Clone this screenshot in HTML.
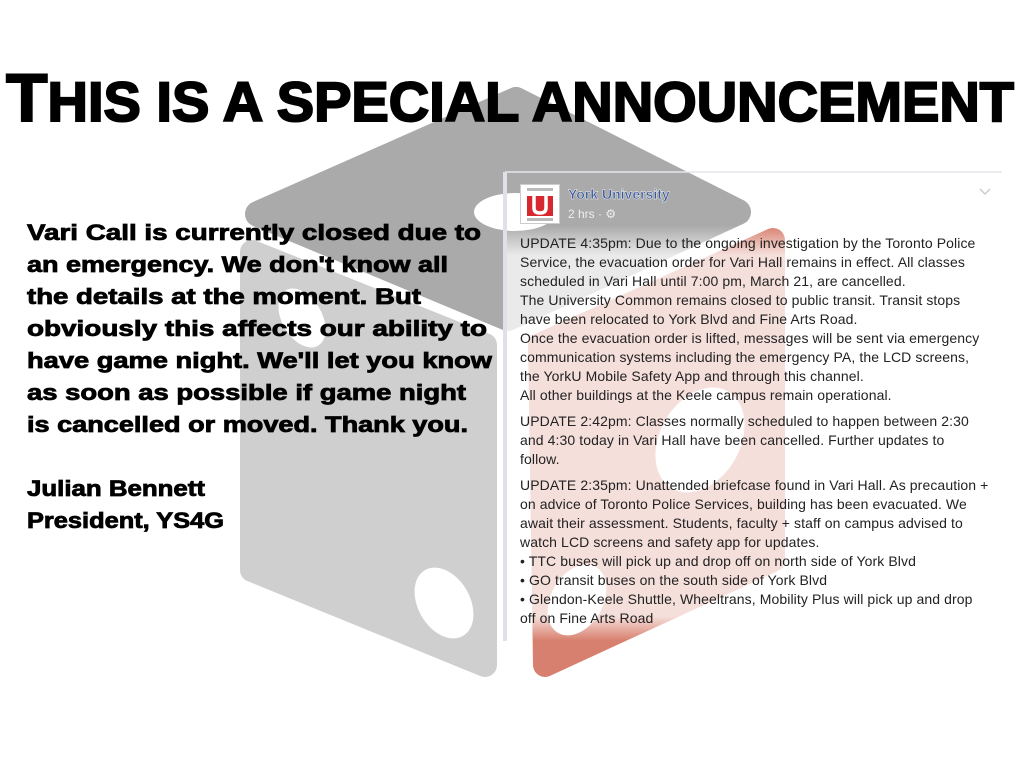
<!DOCTYPE html>
<html><head><meta charset="utf-8"><style>
html,body{margin:0;padding:0;background:#fff;width:1024px;height:768px;overflow:hidden;position:relative}
svg{position:absolute;left:0;top:0}
.card{position:absolute;left:520px;top:234px;width:480px;font:14px/19px "Liberation Sans",sans-serif;color:#222;letter-spacing:0.1px;white-space:nowrap}
.card p{margin:0 0 7px 0}
</style></head><body>
<svg width="1024" height="768" viewBox="0 0 1024 768">
  <defs>
    <linearGradient id="ov" x1="0" y1="172" x2="0" y2="660" gradientUnits="userSpaceOnUse">
      <stop offset="0" stop-color="#fff" stop-opacity="0"/>
      <stop offset="0.11" stop-color="#fff" stop-opacity="0"/>
      <stop offset="0.17" stop-color="#fff" stop-opacity="0.75"/>
      <stop offset="0.91" stop-color="#fff" stop-opacity="0.75"/>
      <stop offset="0.96" stop-color="#fff" stop-opacity="0"/>
    </linearGradient>
  </defs>
  <polygon points="516,100 738,212 508,318 258,214" fill="#aaa" stroke="#aaa" stroke-width="26" stroke-linejoin="round"/>
  <ellipse cx="515" cy="212" rx="41" ry="19" fill="#fff"/>
  <polygon points="252,252 485,345 485,665 252,570" fill="#cfcfcf" stroke="#cfcfcf" stroke-width="24" stroke-linejoin="round"/>
  <ellipse cx="444" cy="603" rx="26" ry="38" transform="rotate(-30 444 603)" fill="#fff"/>
  <ellipse cx="302" cy="318" rx="20" ry="32" transform="rotate(-30 302 318)" fill="#fff"/>
  <polygon points="540,345 773,240 773,560 545,665" fill="#d8806f" stroke="#d8806f" stroke-width="24" stroke-linejoin="round"/>
  <ellipse cx="577" cy="600" rx="26" ry="38" transform="rotate(30 577 600)" fill="#fff"/>
  <ellipse cx="700" cy="440" rx="40" ry="56" transform="rotate(30 700 440)" fill="#fff"/>
  <rect x="505" y="172" width="497" height="500" fill="url(#ov)"/>
  <line x1="505" y1="172" x2="1002" y2="172" stroke="#e4e6ea" stroke-width="1.5"/>
  <rect x="503" y="172" width="4" height="469" fill="#dfe1e6"/>
  <rect x="520.5" y="184.5" width="39" height="39" fill="#fff" stroke="#ccc"/>
  <rect x="527" y="196" width="26" height="20" fill="#d8282f"/>
  <path d="M534 192 V208 Q534 213 540 213 Q546 213 546 208 V192" fill="none" stroke="#fff" stroke-width="3.5"/>
  <rect x="527" y="188" width="26" height="3" fill="#bbb"/>
  <rect x="527" y="218" width="26" height="3" fill="#bbb"/>
  <text x="568" y="199" font-family="Liberation Sans" font-weight="bold" font-size="14" fill="#3b5998" stroke="#fff" stroke-width="0.4">York University</text>
  <text x="568" y="218" font-family="Liberation Sans" font-size="12" fill="#eee">2 hrs · ⚙</text>
  <path d="M980 189 l5 5 l5 -5" fill="none" stroke="#ccc" stroke-width="1.5"/>
  <text x="6" y="121" font-family="Liberation Sans" font-weight="bold" fill="#000" stroke="#000" stroke-width="2" textLength="1008" lengthAdjust="spacingAndGlyphs"><tspan font-size="68">T</tspan><tspan font-size="56">HIS IS A SPECIAL ANNOUNCEMENT</tspan></text>
  <g font-family="Liberation Sans" font-weight="bold" font-size="22" fill="#000" stroke="#000" stroke-width="0.8">
    <text x="27" y="240" textLength="454" lengthAdjust="spacingAndGlyphs">Vari Call is currently closed due to</text>
    <text x="27" y="272" textLength="421" lengthAdjust="spacingAndGlyphs">an emergency. We don't know all</text>
    <text x="27" y="304" textLength="394" lengthAdjust="spacingAndGlyphs">the details at the moment. But</text>
    <text x="27" y="336" textLength="460" lengthAdjust="spacingAndGlyphs">obviously this affects our ability to</text>
    <text x="27" y="368" textLength="465" lengthAdjust="spacingAndGlyphs">have game night. We'll let you know</text>
    <text x="27" y="400" textLength="439" lengthAdjust="spacingAndGlyphs">as soon as possible if game night</text>
    <text x="27" y="432" textLength="441" lengthAdjust="spacingAndGlyphs">is cancelled or moved. Thank you.</text>
    <text x="27" y="496" textLength="178" lengthAdjust="spacingAndGlyphs">Julian Bennett</text>
    <text x="27" y="528" textLength="197" lengthAdjust="spacingAndGlyphs">President, YS4G</text>
  </g>
</svg>
<div class="card">
<p>UPDATE 4:35pm: Due to the ongoing investigation by the Toronto Police<br>Service, the evacuation order for Vari Hall remains in effect. All classes<br>scheduled in Vari Hall until 7:00 pm, March 21, are cancelled.<br>The University Common remains closed to public transit. Transit stops<br>have been relocated to York Blvd and Fine Arts Road.<br>Once the evacuation order is lifted, messages will be sent via emergency<br>communication systems including the emergency PA, the LCD screens,<br>the YorkU Mobile Safety App and through this channel.<br>All other buildings at the Keele campus remain operational.</p>
<p>UPDATE 2:42pm: Classes normally scheduled to happen between 2:30<br>and 4:30 today in Vari Hall have been cancelled. Further updates to<br>follow.</p>
<p>UPDATE 2:35pm: Unattended briefcase found in Vari Hall. As precaution +<br>on advice of Toronto Police Services, building has been evacuated. We<br>await their assessment. Students, faculty + staff on campus advised to<br>watch LCD screens and safety app for updates.<br>• TTC buses will pick up and drop off on north side of York Blvd<br>• GO transit buses on the south side of York Blvd<br>• Glendon-Keele Shuttle, Wheeltrans, Mobility Plus will pick up and drop<br>off on Fine Arts Road</p>
</div>
</body></html>
